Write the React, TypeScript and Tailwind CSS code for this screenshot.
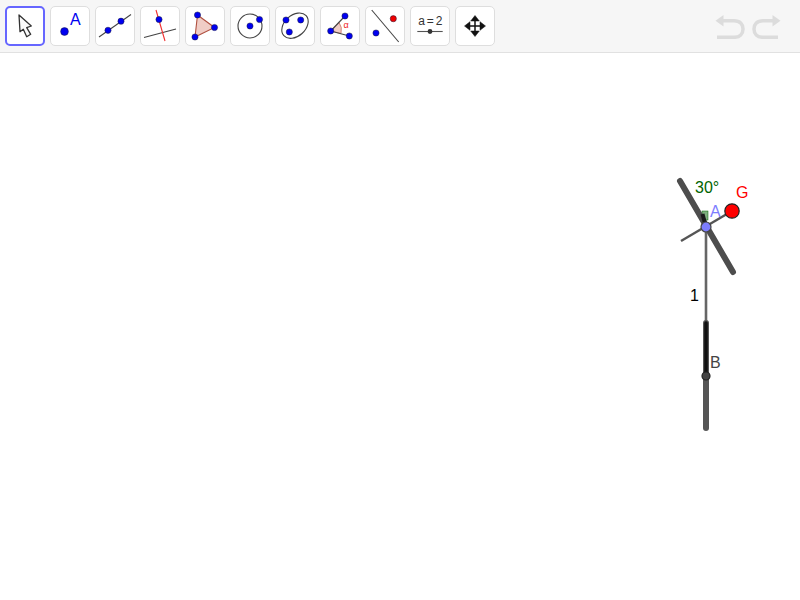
import React from 'react'

const BLUE = '#0000f0'

const Dot = ({ x, y, r = 3.1, fill = BLUE }: { x: number; y: number; r?: number; fill?: string }) => (
  <circle cx={x} cy={y} r={r} fill={fill} stroke="#1a1a3a" strokeWidth={0.5} />
)

const icons: React.ReactNode[] = [
  <path
    key="move"
    d="M14 9 L26.3 20 L21.7 21.7 L25.7 28.3 L21.7 30.7 L18.3 23.3 L15 25.7 Z"
    fill="#fafafa"
    stroke="#333"
    strokeWidth={1.3}
    strokeLinejoin="round"
  />,
  <g key="point">
    <Dot x={14.5} y={25.5} r={3.9} />
    <text x={20} y={19} fontSize={16} fill={BLUE} fontFamily="Liberation Sans, sans-serif">A</text>
  </g>,
  <g key="line">
    <line x1={4} y1={31} x2={36} y2={8.5} stroke="#444" strokeWidth={1.1} />
    <Dot x={13} y={24.3} />
    <Dot x={26} y={15.2} />
  </g>,
  <g key="perp">
    <line x1={4} y1={31.5} x2={36} y2={23} stroke="#444" strokeWidth={1.1} />
    <line x1={16} y1={4} x2={25} y2={35} stroke="#f03030" strokeWidth={1.1} />
    <Dot x={19} y={13.5} />
  </g>,
  <g key="polygon">
    <polygon points="12.5,9 29.5,21.5 10,31" fill="#f0cdc6" stroke="#b05040" strokeWidth={1.1} />
    <Dot x={12.5} y={9} />
    <Dot x={29.5} y={21.5} />
    <Dot x={10} y={31} />
  </g>,
  <g key="circle">
    <circle cx={20} cy={20} r={12} fill="none" stroke="#444" strokeWidth={1.1} />
    <Dot x={20} y={20} />
    <Dot x={29.5} y={13.5} />
  </g>,
  <g key="conic">
    <ellipse cx={20} cy={19.7} rx={15} ry={10.5} transform="rotate(-42 20 19.7)" fill="none" stroke="#444" strokeWidth={1.1} />
    <Dot x={11} y={14} />
    <Dot x={25.7} y={14} />
    <Dot x={14.3} y={26} />
  </g>,
  <g key="angle">
    <path d="M10.7 25 L19 16.5 Q22.5 21 21 27.5 Z" fill="#f0cdc6" stroke="#c06050" strokeWidth={0.7} />
    <line x1={10.7} y1={25} x2={25} y2={10} stroke="#444" strokeWidth={1.1} />
    <line x1={10.7} y1={25} x2={29.3} y2={30} stroke="#444" strokeWidth={1.1} />
    <Dot x={10.7} y={25} />
    <Dot x={25} y={10} />
    <Dot x={29.3} y={30} />
    <text x={23.5} y={22} fontSize={9} fill="#f02020" fontFamily="Liberation Sans, sans-serif">α</text>
  </g>,
  <g key="reflect">
    <line x1={6.7} y1={4} x2={33.7} y2={36} stroke="#444" strokeWidth={1.1} />
    <Dot x={11} y={27} />
    <Dot x={28.3} y={12.7} fill="#f00000" />
  </g>,
  <g key="slider">
    <text x={20} y={19} fontSize={12} letterSpacing={-0.7} textAnchor="middle" fill="#333" fontFamily="Liberation Sans, sans-serif">a = 2</text>
    <line x1={7.3} y1={25.5} x2={32.7} y2={25.5} stroke="#555" strokeWidth={1.1} />
    <circle cx={20} cy={25.5} r={2.4} fill="#333" />
  </g>,
  <g key="pan" fill="#111" stroke="#111">
    <line x1={20} y1={12} x2={20} y2={28} strokeWidth={1.5} />
    <line x1={12} y1={20} x2={28} y2={20} strokeWidth={1.5} />
    <polygon points="20,9.5 15.7,15 24.3,15" strokeWidth={0.5} />
    <polygon points="20,30.5 15.7,25 24.3,25" strokeWidth={0.5} />
    <polygon points="9.5,20 15,15.7 15,24.3" strokeWidth={0.5} />
    <polygon points="30.5,20 25,15.7 25,24.3" strokeWidth={0.5} />
  </g>
]

const App: React.FC = () => {
  return (
    <div className="flex h-[600px] w-[800px] flex-col bg-white font-['Liberation_Sans',sans-serif]">
      <header className="flex h-[53px] items-start justify-between border-b border-[#e1e1e1] bg-[#f6f6f6] pl-[5px] pr-[18px] pt-[6px]">
        <div className="flex gap-[5px]">
          {icons.map((icon, i) => (
            <button
              key={i}
              className={
                i === 0
                  ? 'h-10 w-10 rounded-[5px] border-2 border-[#6666ff] bg-white'
                  : 'h-10 w-10 rounded-[5px] border border-[#dedede] bg-white'
              }
            >
              <svg
                viewBox={i === 0 ? '2 2 36 36' : '1 1 38 38'}
                className="block h-full w-full"
              >
                {icon}
              </svg>
            </button>
          ))}
        </div>

        <div className="mt-[8px] flex gap-[7px]">
          <svg width="30" height="25" viewBox="0 0 30 25" fill="none">
            <path d="M8 6.7 H19 C25 6.7 28 10 28 15 C28 20 25 23.3 19 23.3 H2" stroke="#dcdcdc" strokeWidth="3.5" />
            <polygon points="0.5,6.7 8.5,1 8.5,12.5" fill="#dcdcdc" />
          </svg>
          <svg width="30" height="25" viewBox="0 0 30 25" fill="none">
            <path d="M22 6.7 H11 C5 6.7 2 10 2 15 C2 20 5 23.3 11 23.3 H26" stroke="#dcdcdc" strokeWidth="3.5" />
            <polygon points="28.5,6.7 20.5,1 20.5,12.5" fill="#dcdcdc" />
          </svg>
        </div>
      </header>

      <main className="min-h-0 flex-1">
        <svg viewBox="0 53 800 547" className="block h-full w-full">
          <rect x={702} y={211} width={6} height={9} fill="#7faf7f" stroke="#006400" strokeWidth={0.5} />
          <line x1={680} y1={181} x2={733} y2={272} stroke="#4d4d4d" strokeWidth={6} strokeLinecap="round" />
          <line x1={702.5} y1={214} x2={706} y2={227} stroke="#1a1a1a" strokeWidth={4} />
          <line x1={706} y1={227} x2={706} y2={376} stroke="#666" strokeWidth={2.6} />
          <line x1={681} y1={241} x2={732} y2={211} stroke="#555" strokeWidth={2.4} />
          <line x1={706} y1={323} x2={706} y2={428} stroke="#555" strokeWidth={6} strokeLinecap="round" />
          <line x1={706} y1={323} x2={706} y2={376} stroke="#111" strokeWidth={3.6} strokeLinecap="round" />
          <circle cx={732} cy={211} r={7.2} fill="#ff0000" stroke="#222" strokeWidth={1.2} />
          <circle cx={706} cy={227} r={5} fill="#7d7dff" stroke="#444" strokeWidth={1.2} />
          <circle cx={706} cy={376} r={4} fill="#444" stroke="#222" strokeWidth={1.2} />
          <text x={695} y={193} fontSize={16} fill="#006400">30°</text>
          <text x={736} y={198} fontSize={16} fill="#ff0000">G</text>
          <text x={710} y={217} fontSize={16} fill="#7d7dff">A</text>
          <text x={690} y={301} fontSize={16} fill="#000">1</text>
          <text x={710} y={368} fontSize={16} fill="#444">B</text>
        </svg>
      </main>
    </div>
  )
}

export default App
